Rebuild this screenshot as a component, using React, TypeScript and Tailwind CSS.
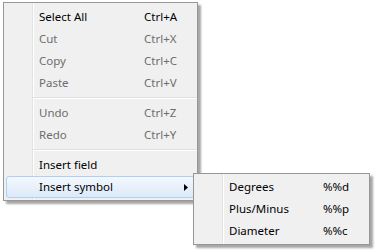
import React from "react";

type Item =
  | { sep: true }
  | { label: string; keys?: string; disabled?: boolean; active?: boolean; sub?: boolean };

const mainItems: Item[] = [
  { label: "Select All", keys: "Ctrl+A" },
  { label: "Cut", keys: "Ctrl+X", disabled: true },
  { label: "Copy", keys: "Ctrl+C", disabled: true },
  { label: "Paste", keys: "Ctrl+V", disabled: true },
  { sep: true },
  { label: "Undo", keys: "Ctrl+Z", disabled: true },
  { label: "Redo", keys: "Ctrl+Y", disabled: true },
  { sep: true },
  { label: "Insert field" },
  { label: "Insert symbol", active: true, sub: true },
];

const symbolItems = [
  { label: "Degrees", keys: "%%d" },
  { label: "Plus/Minus", keys: "%%p" },
  { label: "Diameter", keys: "%%c" },
];

// gutter line on the left of every menu (grey line + white line)
const menuBox =
  "border border-[#979797] shadow-[3px_3px_2px_rgba(0,0,0,0.35)] bg-[linear-gradient(to_right,#f0f0f0_28px,#e2e3e3_28px,#e2e3e3_29px,#ffffff_29px,#ffffff_30px,#f0f0f0_30px)]";

function Row({
  label,
  keys,
  disabled,
  active,
  sub,
  labelWidth,
}: {
  label: string;
  keys?: string;
  disabled?: boolean;
  active?: boolean;
  sub?: boolean;
  labelWidth: string;
}) {
  return (
    <div
      className={
        "mx-[2px] h-[22px] flex items-center pl-[32px] rounded-[3px] border " +
        (active
          ? "border-[#aecff7] bg-gradient-to-b from-[#f3f8fe] to-[#dde9f8]"
          : "border-transparent") +
        (disabled ? " text-[#6d6d6d]" : " text-black")
      }
    >
      <span className={labelWidth + " shrink-0 whitespace-nowrap"}>{label}</span>
      {keys && <span className="whitespace-nowrap">{keys}</span>}
      {sub && (
        <svg width="4" height="7" viewBox="0 0 4 7" className="ml-auto mr-[6px]">
          <polygon points="0,0 4,3.5 0,7" fill="#000" />
        </svg>
      )}
    </div>
  );
}

export default function App() {
  return (
    <div
      className="relative w-[377px] h-[251px] bg-white overflow-hidden text-[11.5px] leading-none"
      style={{ fontFamily: '"Noto Sans", "Segoe UI", sans-serif' }}
    >
      {/* main context menu */}
      <div className={"absolute left-[3px] top-[2px] w-[195px] pt-[3px] pb-[2px] " + menuBox}>
        {mainItems.map((it, i) =>
          "sep" in it ? (
            <div key={i} className="h-[8px] flex flex-col justify-center ml-[29px]">
              <div className="h-px bg-[#e0e0e0]" />
              <div className="h-px bg-white" />
            </div>
          ) : (
            <Row key={i} {...it} labelWidth="w-[105px]" />
          )
        )}
      </div>

      {/* insert symbol submenu */}
      <div className={"absolute left-[193px] top-[173px] w-[177px] pt-[2px] pb-[2px] " + menuBox}>
        {symbolItems.map((it, i) => (
          <Row key={i} {...it} labelWidth="w-[94px]" />
        ))}
      </div>
    </div>
  );
}
